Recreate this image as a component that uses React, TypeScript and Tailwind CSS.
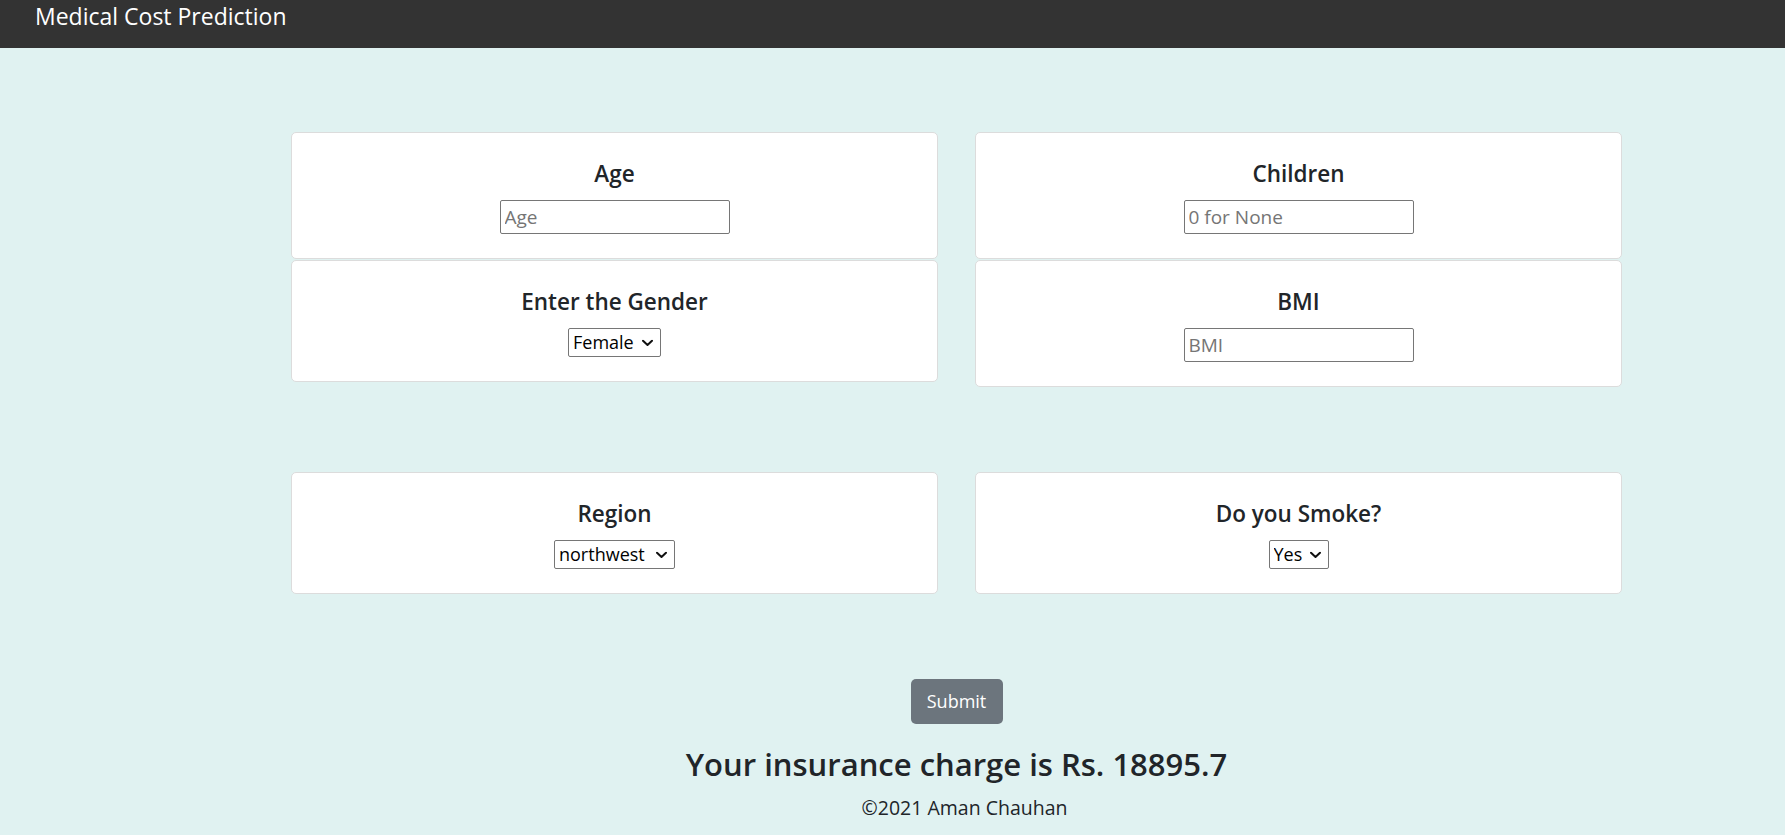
import React from 'react';

const font = { fontFamily: '"Open Sans", "Noto Sans", sans-serif' };

const Chevron: React.FC = () => (
  <svg className="absolute right-[8px] top-1/2 -translate-y-1/2 w-[11px] h-[7px] pointer-events-none" viewBox="0 0 11 7" fill="none">
    <path d="M1 1.2l4.5 4.3L10 1.2" stroke="#111" strokeWidth="2" strokeLinecap="round" strokeLinejoin="round" />
  </svg>
);

const Card: React.FC<{ title: string; children: React.ReactNode }> = ({ title, children }) => (
  <div className="bg-white border border-[#dcdcdc] rounded-[5px] pt-[26px] pb-[24px] flex flex-col items-center">
    <h4 className="text-[22.5px] font-semibold leading-[29px] mb-[12px] text-[#212529]">{title}</h4>
    {children}
  </div>
);

const TextBox: React.FC<{ placeholder: string }> = ({ placeholder }) => (
  <input
    type="text"
    placeholder={placeholder}
    className="w-[230px] h-[34px] border border-[#767676] rounded-[2px] px-[4px] text-[19px] text-black bg-white outline-none placeholder:text-[#757575]"
  />
);

const Dropdown: React.FC<{ options: string[]; width: string }> = ({ options, width }) => (
  <div className="relative">
    <select
      defaultValue={options[0]}
      className={`appearance-none h-[29px] border border-[#767676] rounded-[2px] bg-white pl-[4px] text-[18px] leading-[27px] text-black outline-none ${width}`}
    >
      {options.map((o) => (
        <option key={o}>{o}</option>
      ))}
    </select>
    <Chevron />
  </div>
);

const App: React.FC = () => {
  return (
    <div className="min-h-screen bg-[#e0f2f1] text-[#212529]" style={font}>
      <nav className="h-[48px] bg-[#333333] pl-[35px] pt-[1px]">
        <span className="text-white text-[23px] leading-[31px]">Medical Cost Prediction</span>
      </nav>

      <div className="ml-[291px] w-[1331px] pt-[84px] flex flex-col">
        <div className="grid grid-cols-[647px_647px] gap-x-[37px] items-start">
          <div className="flex flex-col gap-[1px]">
            <Card title="Age">
              <TextBox placeholder="Age" />
            </Card>
            <Card title="Enter the Gender">
              <Dropdown options={['Female', 'Male']} width="w-[93px]" />
            </Card>
          </div>
          <div className="flex flex-col gap-[1px]">
            <Card title="Children">
              <TextBox placeholder="0 for None" />
            </Card>
            <Card title="BMI">
              <TextBox placeholder="BMI" />
            </Card>
          </div>
        </div>

        <div className="grid grid-cols-[647px_647px] gap-x-[37px] items-start mt-[85px]">
          <Card title="Region">
            <Dropdown options={['northwest', 'northeast', 'southeast', 'southwest']} width="w-[121px]" />
          </Card>
          <Card title="Do you Smoke?">
            <Dropdown options={['Yes', 'No']} width="w-[60px]" />
          </Card>
        </div>

        <div className="flex flex-col items-center mt-[85px]">
          <button className="w-[92px] h-[45px] rounded-[5px] bg-[#6c757d] text-white text-[18px]">Submit</button>
          <h2 className="mt-[21px] text-[31px] leading-[38px] font-semibold text-[#212529]">Your insurance charge is Rs. 18895.7</h2>
          <p className="mt-[11px] pl-[16px] text-[19.5px] leading-[27px] text-[#212529]">©2021 Aman Chauhan</p>
        </div>
      </div>
    </div>
  );
};

export default App;
